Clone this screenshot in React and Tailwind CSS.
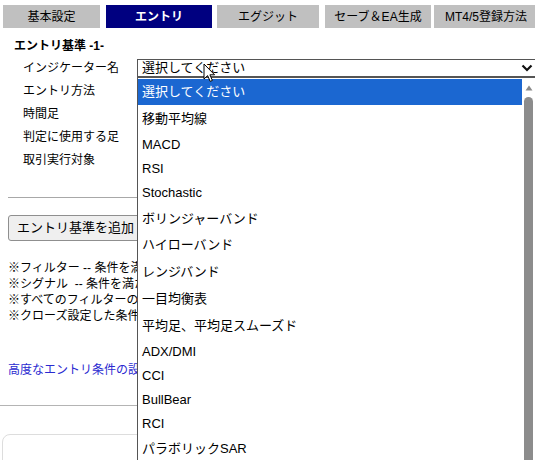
import React from 'react';

const tabs = [
  { label: '基本設定', cls: 'w-[97px] ml-[3px]' },
  { label: 'エントリ', cls: 'w-[106px] ml-[6px]', active: true },
  { label: 'エグジット', cls: 'w-[102px] ml-[5px]' },
  { label: 'セーブ＆EA生成', cls: 'w-[106px] ml-[6px]' },
  { label: 'MT4/5登録方法', cls: 'w-[104px] ml-[3px]' },
];

const labels = ['エントリ方法', '時間足', '判定に使用する足', '取引実行対象'];

// CJK rows sit a little taller than latin ones in the native list
const options = [
  { text: '選択してください', h: 'h-[26px]', selected: true },
  { text: '移動平均線', h: 'h-[27px]' },
  { text: 'MACD', h: 'h-[25px]' },
  { text: 'RSI', h: 'h-[24px]' },
  { text: 'Stochastic', h: 'h-[24px]' },
  { text: 'ボリンジャーバンド', h: 'h-[27px]' },
  { text: 'ハイローバンド', h: 'h-[26px]' },
  { text: 'レンジバンド', h: 'h-[27px]' },
  { text: '一目均衡表', h: 'h-[27px]' },
  { text: '平均足、平均足スムーズド', h: 'h-[27px]' },
  { text: 'ADX/DMI', h: 'h-[25px]' },
  { text: 'CCI', h: 'h-[24px]' },
  { text: 'BullBear', h: 'h-[24px]' },
  { text: 'RCI', h: 'h-[24px]' },
  { text: 'パラボリックSAR', h: 'h-[26px]' },
];

const notes = [
  '※フィルター -- 条件を満たしている間のみエントリーを許可します',
  '※シグナル  -- 条件を満たした時点でエントリーします',
  '※すべてのフィルターの条件を満たした上でシグナルが発生した時にエントリーします',
  '※クローズ設定した条件はエグジットタブで確認できます',
];

function Chevron() {
  return (
    <svg width="12" height="8" viewBox="0 0 12 8" className="shrink-0">
      <path d="M1.5 1.5 L6 6 L10.5 1.5" fill="none" stroke="#111" strokeWidth="2.2" />
    </svg>
  );
}

function Cursor() {
  return (
    <svg width="13" height="20" viewBox="0 0 13 20" className="absolute left-[203px] top-[63px]">
      <path d="M1 1 L1 16 L4.6 12.6 L7.2 18.4 L9.4 17.4 L6.9 11.8 L11.6 11.8 Z" fill="#fff" stroke="#000" strokeWidth="1" strokeLinejoin="round" />
    </svg>
  );
}

export default function App() {
  return (
    <div
      className="relative w-[535px] h-[460px] overflow-hidden bg-white text-black"
      style={{ fontFamily: '"Liberation Sans", "Noto Sans CJK JP", sans-serif' }}
    >
      {/* tab bar */}
      <div className="flex pt-[5px]">
        {tabs.map((t) => (
          <div
            key={t.label}
            className={`${t.cls} h-[23px] shrink-0 flex items-center justify-center text-[12px] ${
              t.active ? 'bg-[#000080] text-white font-bold' : 'bg-[#c0c0c0] text-black'
            }`}
          >
            {t.label}
          </div>
        ))}
      </div>

      <div className="mt-[11px] pl-[14px] text-[12px] leading-[14px] font-bold">エントリ基準 -1-</div>

      <div className="mt-[4px]">
        <div className="flex items-center h-[22px]">
          <div className="w-[137px] pl-[23px] text-[12px] leading-[14px] shrink-0">インジケーター名</div>
          <div className="flex-1 h-[18px] -mr-[4px] border border-[#555] flex items-center justify-between pl-[4px] pr-[5px]">
            <span className="text-[13px] leading-[16px]">選択してください</span>
            <Chevron />
          </div>
        </div>
        {labels.map((l) => (
          <div key={l} className="flex items-center h-[23px]">
            <div className="pl-[23px] text-[12px] leading-[14px]">{l}</div>
          </div>
        ))}
      </div>

      <div className="mt-[26px] mx-[8px] border-t border-[#a8a8a8]" />

      {/* left column below the open list, the list hides everything right of x=137 */}
      <div className="w-[137px] overflow-hidden pl-[8px]">
        <div className="mt-[17px] w-[160px]">
          <button className="h-[26px] px-[8px] border border-[#8f8f8f] rounded-[3px] bg-[#efefef] text-[13px] leading-[16px] whitespace-nowrap">
            エントリ基準を追加
          </button>
        </div>

        <div className="mt-[19px] text-[12px] leading-[16px] whitespace-pre">
          {notes.map((n) => (
            <div key={n}>{n}</div>
          ))}
        </div>

        <div className="mt-[38px] text-[12px] leading-[16px] text-[#2a2ad0] whitespace-nowrap">高度なエントリ条件の設定はこちら</div>
      </div>

      <div className="mt-[27px] border-t border-[#b4b4b4]" />

      <div className="mt-[28px] ml-[2px] h-[80px] border border-[#dddddd] rounded-[8px]" />

      {/* open dropdown list */}
      <div className="absolute left-[137px] top-[77px] w-[400px] h-[400px] bg-white border-l border-t border-[#555] flex pt-[1px]">
        <div className="w-[384px] shrink-0">
          {options.map((o) => (
            <div
              key={o.text}
              className={`${o.h} flex items-center pl-[4px] text-[13px] leading-[16px] whitespace-nowrap ${
                o.selected ? 'bg-[#1b67d1] text-white' : 'text-black'
              }`}
            >
              {o.text}
            </div>
          ))}
        </div>
        <div className="w-[15px] shrink-0 pl-[1px] flex flex-col">
          <div className="h-[18px] flex items-center justify-center w-[9px] ml-[1px]">
            <svg width="8" height="6" viewBox="0 0 8 6">
              <path d="M4 0.5 L7.5 5.5 L0.5 5.5 Z" fill="#8a8a8a" />
            </svg>
          </div>
          <div className="w-[9px] ml-[1px] flex-1 bg-[#8c8c8c] rounded-t-[5px]" />
        </div>
      </div>

      <Cursor />
    </div>
  );
}
